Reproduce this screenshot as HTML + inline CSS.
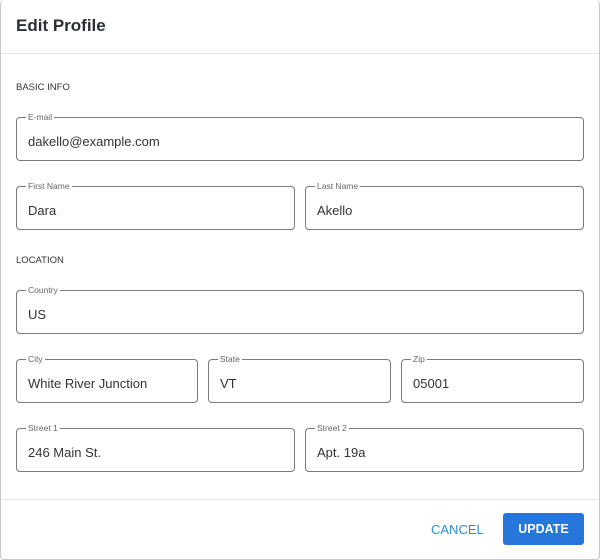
<!DOCTYPE html>
<html><head><style>
*{box-sizing:border-box;margin:0;padding:0}
body{width:600px;height:560px;background:#fff;font-family:"Liberation Sans",sans-serif;position:relative;overflow:hidden}
.dlg{position:absolute;left:0;top:0;width:600px;height:560px;border:1px solid #c8c8c8;border-top:none;border-radius:4px}
h1{position:absolute;left:16px;top:16px;font-size:17px;font-weight:bold;color:#2b2f36}
.hr{position:absolute;left:1px;right:1px;height:1px;background:#e3e6ea}
.sec{position:absolute;left:16px;font-size:9.5px;color:#333}
.f{position:absolute;height:44px;border:1px solid #7a7a7a;border-radius:4px}
.f span{position:absolute;left:9px;top:-6px;font-size:8.5px;color:#666;background:#fff;padding:0 2px;line-height:10px}
.f div{position:absolute;left:11px;top:16px;font-size:13px;color:#333}
.cancel{position:absolute;left:431px;top:522px;font-size:13px;color:#2b8fd6}
.upd{position:absolute;left:503px;top:513px;width:81px;height:32px;background:#2676dc;border-radius:3px;color:#fff;font-size:12.5px;font-weight:bold;text-align:center;line-height:33px}
</style></head><body>
<div class="dlg"></div>
<h1>Edit Profile</h1>
<div class="hr" style="top:53px"></div>
<div class="sec" style="top:82px">BASIC INFO</div>
<div class="f" style="left:16px;top:117px;width:568px"><span>E-mail</span><div>dakello@example.com</div></div>
<div class="f" style="left:16px;top:186px;width:279px"><span>First Name</span><div>Dara</div></div>
<div class="f" style="left:305px;top:186px;width:279px"><span>Last Name</span><div>Akello</div></div>
<div class="sec" style="top:255px">LOCATION</div>
<div class="f" style="left:16px;top:290px;width:568px"><span>Country</span><div>US</div></div>
<div class="f" style="left:16px;top:359px;width:182px"><span>City</span><div>White River Junction</div></div>
<div class="f" style="left:208px;top:359px;width:183px"><span>State</span><div>VT</div></div>
<div class="f" style="left:401px;top:359px;width:183px"><span>Zip</span><div>05001</div></div>
<div class="f" style="left:16px;top:428px;width:279px"><span>Street 1</span><div>246 Main St.</div></div>
<div class="f" style="left:305px;top:428px;width:279px"><span>Street 2</span><div>Apt. 19a</div></div>
<div class="hr" style="top:499px"></div>
<div class="cancel">CANCEL</div>
<div class="upd">UPDATE</div>
</body></html>
